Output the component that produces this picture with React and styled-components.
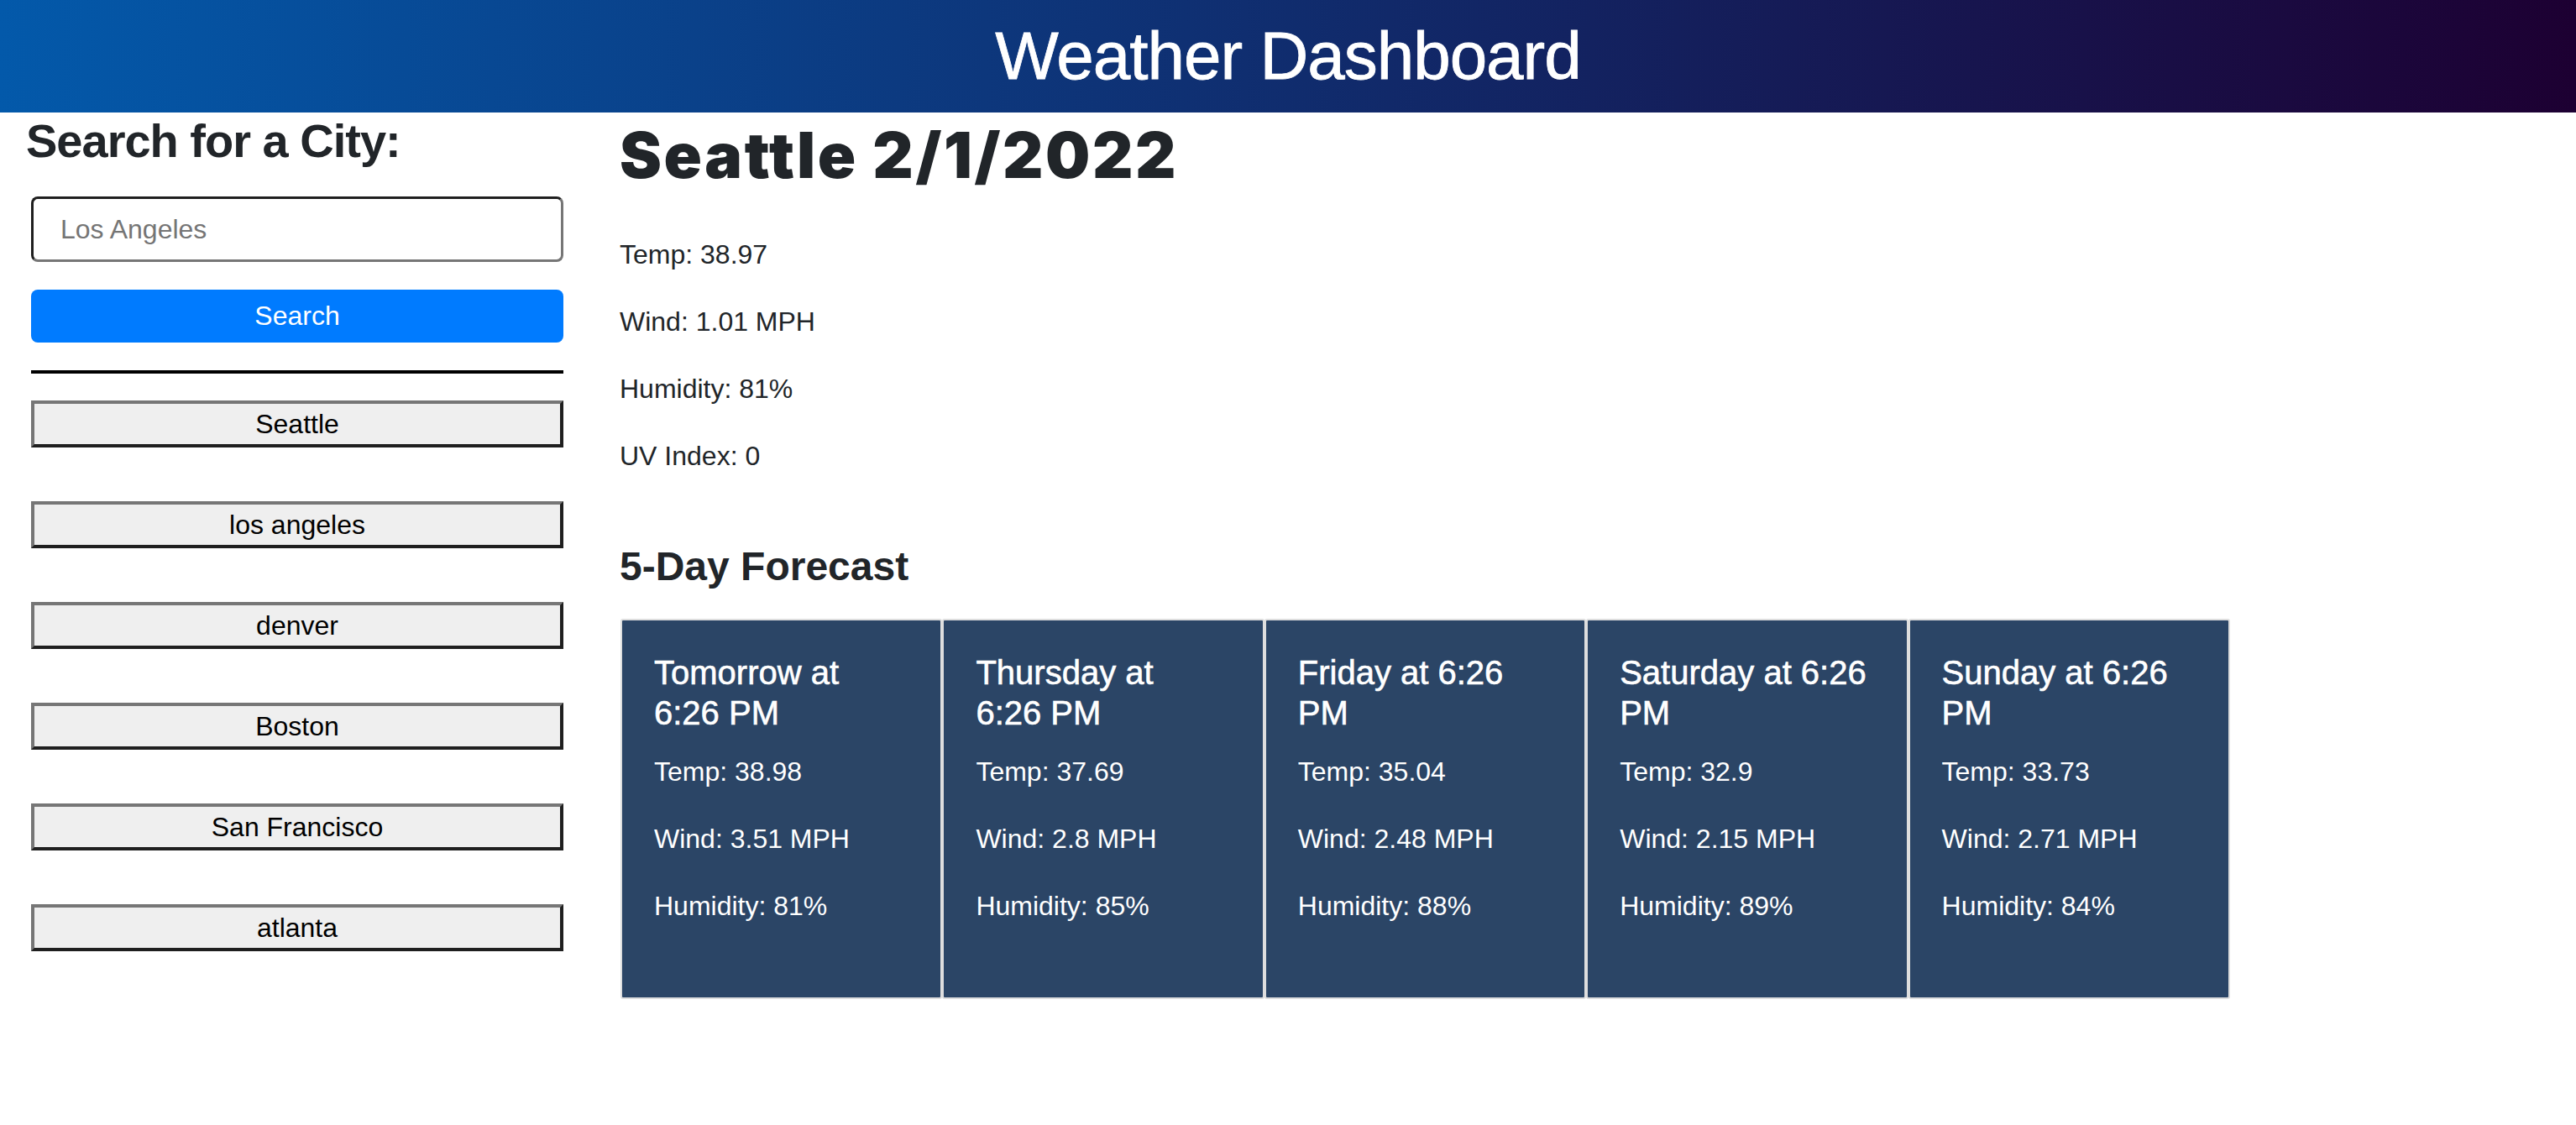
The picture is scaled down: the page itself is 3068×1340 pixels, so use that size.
import styled, { createGlobalStyle } from 'styled-components';

const GlobalStyle = createGlobalStyle`
    body {
        margin: 0;
        font-family: "Liberation Sans", Arial, sans-serif;
        color: #212529;
        background-color: #fff;
    }
`;

const App = () => {
    return (
        <>
            <GlobalStyle/>
            <Header>
                <HeaderTitle>Weather Dashboard</HeaderTitle>
            </Header>
            <Layout>
                <Sidebar>
                    <SideHeading>Search for a City:</SideHeading>
                    <Controls>
                        <CityInput type="text" placeholder="Los Angeles"/>
                        <SearchButton>Search</SearchButton>
                        <Divider/>
                        <CityList>
                            {cities.map((city) =>
                                <CityButton key={city}>{city}</CityButton>
                            )}
                        </CityList>
                    </Controls>
                </Sidebar>
                <Main>
                    <CityTitle>Seattle 2/1/2022</CityTitle>
                    <Stats>
                        <Stat>Temp: 38.97</Stat>
                        <Stat>Wind: 1.01 MPH</Stat>
                        <Stat>Humidity: 81%</Stat>
                        <Stat>UV Index: 0</Stat>
                    </Stats>
                    <ForecastHeading>5-Day Forecast</ForecastHeading>
                    <CardRow>
                        {forecast.map((day) =>
                            <Card key={day.title}>
                                <CardTitle>{day.title}</CardTitle>
                                <Stat>Temp: {day.temp}</Stat>
                                <Stat>Wind: {day.wind} MPH</Stat>
                                <Stat>Humidity: {day.humidity}%</Stat>
                            </Card>
                        )}
                    </CardRow>
                </Main>
            </Layout>
        </>
    )
}

const cities = ["Seattle", "los angeles", "denver", "Boston", "San Francisco", "atlanta"];
const forecast = [
    { title: "Tomorrow at 6:26 PM", temp: "38.98", wind: "3.51", humidity: 81 },
    { title: "Thursday at 6:26 PM", temp: "37.69", wind: "2.8", humidity: 85 },
    { title: "Friday at 6:26 PM", temp: "35.04", wind: "2.48", humidity: 88 },
    { title: "Saturday at 6:26 PM", temp: "32.9", wind: "2.15", humidity: 89 },
    { title: "Sunday at 6:26 PM", temp: "33.73", wind: "2.71", humidity: 84 },
];

const Header = styled.header`
    height: 134px;
    display: flex;
    align-items: center;
    justify-content: center;
    background: linear-gradient(to right, #0359aa, #1d0032);
`;

const HeaderTitle = styled.h1`
    margin: 0;
    color: #fff;
    font-size: 80px;
    font-weight: 400;
    letter-spacing: -1px;
    line-height: 1;
    -webkit-text-stroke: 0.8px #fff;
`;

const Layout = styled.div`
    display: flex;
    align-items: flex-start;
`;

const Sidebar = styled.aside`
    flex-shrink: 0;
    width: 671px;
    box-sizing: border-box;
    padding-left: 31px;
`;

const SideHeading = styled.h3`
    margin: 0 0 33px 0;
    font-size: 56px;
    font-weight: 700;
    line-height: 67px;
    letter-spacing: -1px;
`;

const Controls = styled.div`
    margin-left: 6px;
    width: 634px;
    display: flex;
    flex-direction: column;
`;

const CityInput = styled.input`
    box-sizing: border-box;
    height: 78px;
    width: 100%;
    border: 3px solid;
    border-color: #1f1f1f #767676 #767676 #1f1f1f;
    border-radius: 8px;
    padding: 0 32px;
    font-family: inherit;
    font-size: 32px;
    color: #212529;
    ::placeholder {
        color: #757575;
    }
    &:focus { outline: none; }
`;

const SearchButton = styled.button`
    margin-top: 33px;
    height: 63px;
    border: none;
    border-radius: 8px;
    background-color: #007bff;
    color: #fff;
    font-family: inherit;
    font-size: 32px;
`;

const Divider = styled.hr`
    margin: 33px 0 32px 0;
    height: 4px;
    border: none;
    background-color: #000;
`;

const CityList = styled.div`
    display: flex;
    flex-direction: column;
    gap: 64px;
`;

const CityButton = styled.button`
    box-sizing: border-box;
    height: 56px;
    padding: 0;
    border: 4px solid;
    border-color: #767676 #1f1f1f #1f1f1f #767676;
    background-color: #efefef;
    color: #000;
    font-family: inherit;
    font-size: 32px;
`;

const Main = styled.main`
    flex: 1;
    display: flex;
    flex-direction: column;
    padding: 6px 0 0 67px;
`;

const CityTitle = styled.h1`
    margin: 0;
    font-family: Inter, "Liberation Sans", sans-serif;
    font-size: 75px;
    font-weight: 900;
    line-height: 90px;
    letter-spacing: 2.6px;
`;

const Stats = styled.div`
    margin-top: 49px;
`;

const Stat = styled.p`
    margin: 0 0 32px 0;
    font-size: 32px;
    line-height: 48px;
`;

const ForecastHeading = styled.h4`
    margin: 47px 0 33px 0;
    font-size: 48px;
    font-weight: 700;
    line-height: 58px;
`;

const CardRow = styled.div`
    display: flex;
    padding-left: 1px;
`;

const Card = styled.div`
    flex: 0 0 383.4px;
    height: 453px;
    box-sizing: border-box;
    border: 2px solid #dedede;
    border-radius: 3px;
    background-color: #2b4566;
    color: #fff;
    padding: 38px 45px 0 38px;
`;

const CardTitle = styled.h5`
    margin: 0 0 22px 0;
    font-size: 40px;
    font-weight: 500;
    line-height: 48px;
    -webkit-text-stroke: 0.6px #fff;
`;

export default App;
